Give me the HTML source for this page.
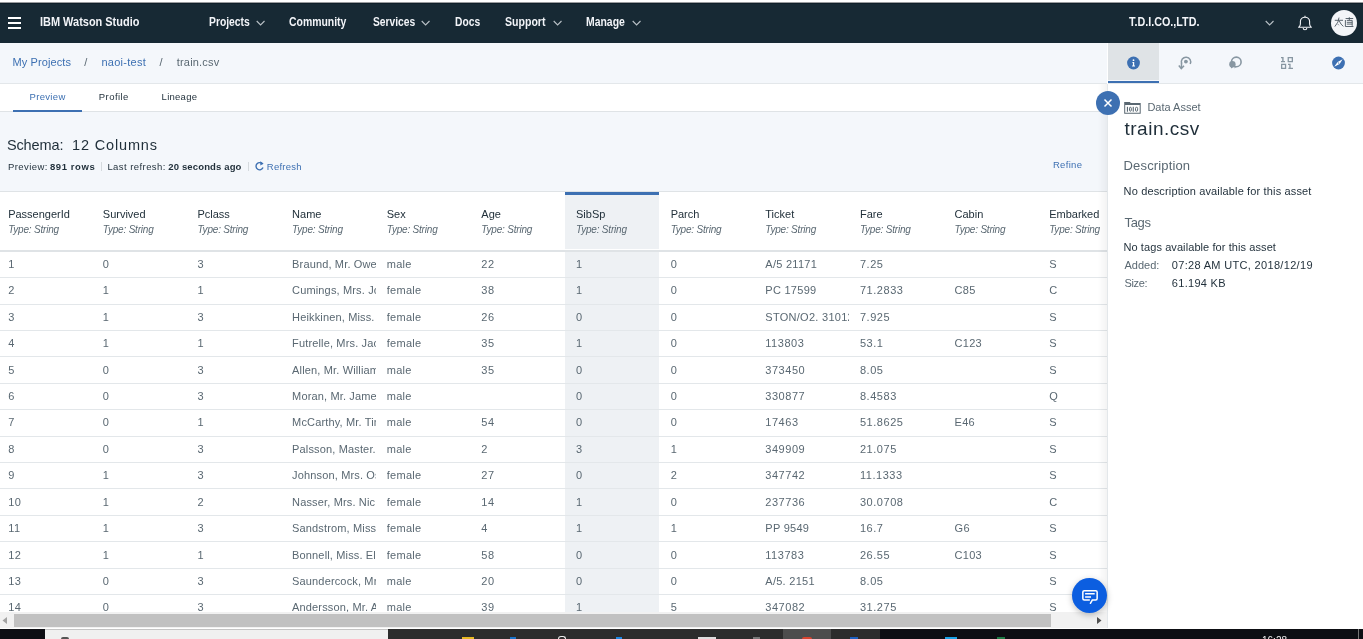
<!DOCTYPE html>
<html><head><meta charset="utf-8"><style>
*{box-sizing:border-box;margin:0;padding:0}
html,body{width:1363px;height:639px;overflow:hidden;background:#f4f7fb;font-family:"Liberation Sans",sans-serif;position:relative}
.abs{position:absolute}
.tx{position:absolute;white-space:nowrap}
.hn{position:absolute;font-size:11px;line-height:11px;color:#22313b;white-space:nowrap}
.ht{position:absolute;font-size:10px;line-height:10px;letter-spacing:-0.2px;font-style:italic;color:#5a6872;white-space:nowrap}
.cl{position:absolute;font-size:11px;line-height:11px;letter-spacing:0.4px;color:#5a6872;white-space:nowrap;overflow:hidden;height:14px}
.rl{left:0;width:1108px;height:1px;background:#e3e7ea}
.chev{position:absolute;width:5.5px;height:5.5px;border-right:1px solid #c9ced3;border-bottom:1px solid #c9ced3;transform:rotate(45deg)}
</style></head><body><div id="root" style="position:absolute;left:0;top:0;width:1363px;height:639px;overflow:hidden;will-change:transform">
<div class="abs" style="left:0;top:0;width:1363px;height:3px;background:#fff"></div>
<!-- header -->
<div class="abs" style="left:0;top:2px;width:1363px;height:1px;background:#9a9c9f"></div><div class="abs" style="left:0;top:3px;width:1363px;height:40px;background:#172934;border-top:1px solid #0f1f29"></div>
<div class="abs" style="left:8px;top:17px;width:13px;height:2px;background:#fff"></div>
<div class="abs" style="left:8px;top:22px;width:13px;height:2px;background:#fff"></div>
<div class="abs" style="left:8px;top:27px;width:13px;height:2px;background:#fff"></div>
<svg class="abs" style="left:255.6px;top:19.6px" width="10" height="7" viewBox="0 0 10 7"><path d="M0.7 1 L4.6 5 L8.5 1" fill="none" stroke="#b9c0c6" stroke-width="1.1"/></svg>
<svg class="abs" style="left:420.8px;top:19.6px" width="10" height="7" viewBox="0 0 10 7"><path d="M0.7 1 L4.6 5 L8.5 1" fill="none" stroke="#b9c0c6" stroke-width="1.1"/></svg>
<svg class="abs" style="left:552.5px;top:19.6px" width="10" height="7" viewBox="0 0 10 7"><path d="M0.7 1 L4.6 5 L8.5 1" fill="none" stroke="#b9c0c6" stroke-width="1.1"/></svg>
<svg class="abs" style="left:631.8px;top:19.6px" width="10" height="7" viewBox="0 0 10 7"><path d="M0.7 1 L4.6 5 L8.5 1" fill="none" stroke="#b9c0c6" stroke-width="1.1"/></svg>
<svg class="abs" style="left:1264.8px;top:19.6px" width="10" height="7" viewBox="0 0 10 7"><path d="M0.7 1 L4.6 5 L8.5 1" fill="none" stroke="#b9c0c6" stroke-width="1.1"/></svg>
<svg class="abs" style="left:1296px;top:14px" width="18" height="18" viewBox="0 0 18 18"><path d="M2.6 13.3 L15.4 13.3 Q13.6 11.8 13.6 10 L13.6 7.6 C13.6 4.9 11.5 3.2 9 3.2 C6.5 3.2 4.4 4.9 4.4 7.6 L4.4 10 Q4.4 11.8 2.6 13.3 Z" fill="none" stroke="#f2f4f8" stroke-width="1.1" stroke-linejoin="round"/><path d="M7.2 13.9 A1.75 1.75 0 0 0 10.8 13.9" fill="none" stroke="#f2f4f8" stroke-width="1.1"/><path d="M9 1.7 L9 3.2" stroke="#f2f4f8" stroke-width="1.1"/></svg>
<div class="abs" style="left:1331px;top:10px;width:26px;height:26px;border-radius:50%;background:#f3f5f8"></div>
<svg class="abs" style="left:1333px;top:16px" width="22" height="12" viewBox="0 0 22 12"><g fill="none" stroke="#4a5660" stroke-width="0.9"><path d="M1.8 4.3 L10 4.3"/><path d="M6 1.6 Q6 6 1.8 10.6"/><path d="M6.3 5 Q7.8 8.6 10.4 10.4"/><path d="M5 8.3 L5.8 9.2"/><path d="M12.6 2.5 L20.2 2.5"/><path d="M16.3 1.2 L16.3 4.2"/><path d="M13.8 4.4 L19.2 4.4 L19.2 9.8 M13.8 6.3 L19.2 6.3 M13.8 8.1 L19.2 8.1"/><path d="M12.4 4 L12.4 10.5 L20.4 10.5"/></g></svg>
<!-- breadcrumb / tabs -->
<div class="abs" style="left:0;top:83px;width:1108px;height:1px;background:#e3e7ea"></div>
<div class="abs" style="left:0;top:84px;width:1108px;height:27px;background:#fff"></div>
<div class="abs" style="left:0;top:111px;width:1108px;height:1px;background:#dfe3e6"></div>
<div class="abs" style="left:13px;top:110px;width:69px;height:2px;background:#3d70b2"></div>
<!-- meta separators -->
<div class="abs" style="left:100.5px;top:162px;width:1px;height:9px;background:#d5dade"></div>
<div class="abs" style="left:247.5px;top:162px;width:1px;height:9px;background:#d5dade"></div>
<svg class="abs" style="left:255px;top:160px" width="10" height="12" viewBox="0 0 10 12"><path d="M7.6 4.2 A3.6 3.6 0 1 0 8 7.5" fill="none" stroke="#3d70b2" stroke-width="1.4"/><path d="M5.2 1.2 L8.6 3.6 L5.4 5.6 Z" fill="#3d70b2"/></svg>
<!-- table -->
<div class="abs" style="left:0;top:191px;width:1108px;height:1px;background:#dfe3e6"></div>
<div class="abs" style="left:0;top:192px;width:1108px;height:420px;background:#fff"></div>
<div class="abs" style="left:565px;top:192px;width:94px;height:57px;background:#eef1f4"></div>
<div class="abs" style="left:565px;top:192px;width:94px;height:3px;background:#3d70b2"></div>
<div class="abs" style="left:565px;top:252px;width:94px;height:360px;background:#eef1f4"></div>
<div class="abs" style="left:0;top:250px;width:1108px;height:2px;background:#dfe3e6"></div>
<div class="abs rl" style="top:277px"></div>
<div class="abs rl" style="top:304px"></div>
<div class="abs rl" style="top:330px"></div>
<div class="abs rl" style="top:356px"></div>
<div class="abs rl" style="top:383px"></div>
<div class="abs rl" style="top:409px"></div>
<div class="abs rl" style="top:436px"></div>
<div class="abs rl" style="top:462px"></div>
<div class="abs rl" style="top:488px"></div>
<div class="abs rl" style="top:515px"></div>
<div class="abs rl" style="top:541px"></div>
<div class="abs rl" style="top:568px"></div>
<div class="abs rl" style="top:594px"></div>
<div class="abs rl" style="top:621px"></div>
<div class="hn" style="left:8.16px;top:209.3px">PassengerId</div>
<div class="ht" style="left:8.16px;top:225.0px">Type: String</div>
<div class="cl" style="left:8.16px;top:259.0px;width:83.64px;letter-spacing:0.55px">1</div>
<div class="cl" style="left:8.16px;top:285.0px;width:83.64px;letter-spacing:0.55px">2</div>
<div class="cl" style="left:8.16px;top:312.0px;width:83.64px;letter-spacing:0.55px">3</div>
<div class="cl" style="left:8.16px;top:338.0px;width:83.64px;letter-spacing:0.55px">4</div>
<div class="cl" style="left:8.16px;top:365.0px;width:83.64px;letter-spacing:0.55px">5</div>
<div class="cl" style="left:8.16px;top:391.0px;width:83.64px;letter-spacing:0.55px">6</div>
<div class="cl" style="left:8.16px;top:417.0px;width:83.64px;letter-spacing:0.55px">7</div>
<div class="cl" style="left:8.16px;top:444.0px;width:83.64px;letter-spacing:0.55px">8</div>
<div class="cl" style="left:8.16px;top:470.0px;width:83.64px;letter-spacing:0.55px">9</div>
<div class="cl" style="left:8.16px;top:497.0px;width:83.64px;letter-spacing:0.55px">10</div>
<div class="cl" style="left:8.16px;top:523.0px;width:83.64px;letter-spacing:0.55px">11</div>
<div class="cl" style="left:8.16px;top:550.0px;width:83.64px;letter-spacing:0.55px">12</div>
<div class="cl" style="left:8.16px;top:576.0px;width:83.64px;letter-spacing:0.55px">13</div>
<div class="cl" style="left:8.16px;top:602.0px;width:83.64px;letter-spacing:0.55px">14</div>
<div class="hn" style="left:102.80px;top:209.3px">Survived</div>
<div class="ht" style="left:102.80px;top:225.0px">Type: String</div>
<div class="cl" style="left:102.80px;top:259.0px;width:83.64px;letter-spacing:0.55px">0</div>
<div class="cl" style="left:102.80px;top:285.0px;width:83.64px;letter-spacing:0.55px">1</div>
<div class="cl" style="left:102.80px;top:312.0px;width:83.64px;letter-spacing:0.55px">1</div>
<div class="cl" style="left:102.80px;top:338.0px;width:83.64px;letter-spacing:0.55px">1</div>
<div class="cl" style="left:102.80px;top:365.0px;width:83.64px;letter-spacing:0.55px">0</div>
<div class="cl" style="left:102.80px;top:391.0px;width:83.64px;letter-spacing:0.55px">0</div>
<div class="cl" style="left:102.80px;top:417.0px;width:83.64px;letter-spacing:0.55px">0</div>
<div class="cl" style="left:102.80px;top:444.0px;width:83.64px;letter-spacing:0.55px">0</div>
<div class="cl" style="left:102.80px;top:470.0px;width:83.64px;letter-spacing:0.55px">1</div>
<div class="cl" style="left:102.80px;top:497.0px;width:83.64px;letter-spacing:0.55px">1</div>
<div class="cl" style="left:102.80px;top:523.0px;width:83.64px;letter-spacing:0.55px">1</div>
<div class="cl" style="left:102.80px;top:550.0px;width:83.64px;letter-spacing:0.55px">1</div>
<div class="cl" style="left:102.80px;top:576.0px;width:83.64px;letter-spacing:0.55px">0</div>
<div class="cl" style="left:102.80px;top:602.0px;width:83.64px;letter-spacing:0.55px">0</div>
<div class="hn" style="left:197.44px;top:209.3px">Pclass</div>
<div class="ht" style="left:197.44px;top:225.0px">Type: String</div>
<div class="cl" style="left:197.44px;top:259.0px;width:83.64px;letter-spacing:0.55px">3</div>
<div class="cl" style="left:197.44px;top:285.0px;width:83.64px;letter-spacing:0.55px">1</div>
<div class="cl" style="left:197.44px;top:312.0px;width:83.64px;letter-spacing:0.55px">3</div>
<div class="cl" style="left:197.44px;top:338.0px;width:83.64px;letter-spacing:0.55px">1</div>
<div class="cl" style="left:197.44px;top:365.0px;width:83.64px;letter-spacing:0.55px">3</div>
<div class="cl" style="left:197.44px;top:391.0px;width:83.64px;letter-spacing:0.55px">3</div>
<div class="cl" style="left:197.44px;top:417.0px;width:83.64px;letter-spacing:0.55px">1</div>
<div class="cl" style="left:197.44px;top:444.0px;width:83.64px;letter-spacing:0.55px">3</div>
<div class="cl" style="left:197.44px;top:470.0px;width:83.64px;letter-spacing:0.55px">3</div>
<div class="cl" style="left:197.44px;top:497.0px;width:83.64px;letter-spacing:0.55px">2</div>
<div class="cl" style="left:197.44px;top:523.0px;width:83.64px;letter-spacing:0.55px">3</div>
<div class="cl" style="left:197.44px;top:550.0px;width:83.64px;letter-spacing:0.55px">1</div>
<div class="cl" style="left:197.44px;top:576.0px;width:83.64px;letter-spacing:0.55px">3</div>
<div class="cl" style="left:197.44px;top:602.0px;width:83.64px;letter-spacing:0.55px">3</div>
<div class="hn" style="left:292.08px;top:209.3px">Name</div>
<div class="ht" style="left:292.08px;top:225.0px">Type: String</div>
<div class="cl" style="left:292.08px;top:259.0px;width:83.64px;letter-spacing:0.15px">Braund, Mr. Owen Harris</div>
<div class="cl" style="left:292.08px;top:285.0px;width:83.64px;letter-spacing:0.15px">Cumings, Mrs. John Bradley</div>
<div class="cl" style="left:292.08px;top:312.0px;width:83.64px;letter-spacing:0.15px">Heikkinen, Miss. Laina</div>
<div class="cl" style="left:292.08px;top:338.0px;width:83.64px;letter-spacing:0.15px">Futrelle, Mrs. Jacques Heath</div>
<div class="cl" style="left:292.08px;top:365.0px;width:83.64px;letter-spacing:0.15px">Allen, Mr. William Henry</div>
<div class="cl" style="left:292.08px;top:391.0px;width:83.64px;letter-spacing:0.15px">Moran, Mr. James</div>
<div class="cl" style="left:292.08px;top:417.0px;width:83.64px;letter-spacing:0.15px">McCarthy, Mr. Timothy J</div>
<div class="cl" style="left:292.08px;top:444.0px;width:83.64px;letter-spacing:0.15px">Palsson, Master. Gosta Leonard</div>
<div class="cl" style="left:292.08px;top:470.0px;width:83.64px;letter-spacing:0.15px">Johnson, Mrs. Oscar W</div>
<div class="cl" style="left:292.08px;top:497.0px;width:83.64px;letter-spacing:0.15px">Nasser, Mrs. Nicholas</div>
<div class="cl" style="left:292.08px;top:523.0px;width:83.64px;letter-spacing:0.15px">Sandstrom, Miss. Marguerite Rut</div>
<div class="cl" style="left:292.08px;top:550.0px;width:83.64px;letter-spacing:0.15px">Bonnell, Miss. Elizabeth</div>
<div class="cl" style="left:292.08px;top:576.0px;width:83.64px;letter-spacing:0.15px">Saundercock, Mr. William Henry</div>
<div class="cl" style="left:292.08px;top:602.0px;width:83.64px;letter-spacing:0.15px">Andersson, Mr. Anders Johan</div>
<div class="hn" style="left:386.72px;top:209.3px">Sex</div>
<div class="ht" style="left:386.72px;top:225.0px">Type: String</div>
<div class="cl" style="left:386.72px;top:259.0px;width:83.64px;letter-spacing:0.28px">male</div>
<div class="cl" style="left:386.72px;top:285.0px;width:83.64px;letter-spacing:0.28px">female</div>
<div class="cl" style="left:386.72px;top:312.0px;width:83.64px;letter-spacing:0.28px">female</div>
<div class="cl" style="left:386.72px;top:338.0px;width:83.64px;letter-spacing:0.28px">female</div>
<div class="cl" style="left:386.72px;top:365.0px;width:83.64px;letter-spacing:0.28px">male</div>
<div class="cl" style="left:386.72px;top:391.0px;width:83.64px;letter-spacing:0.28px">male</div>
<div class="cl" style="left:386.72px;top:417.0px;width:83.64px;letter-spacing:0.28px">male</div>
<div class="cl" style="left:386.72px;top:444.0px;width:83.64px;letter-spacing:0.28px">male</div>
<div class="cl" style="left:386.72px;top:470.0px;width:83.64px;letter-spacing:0.28px">female</div>
<div class="cl" style="left:386.72px;top:497.0px;width:83.64px;letter-spacing:0.28px">female</div>
<div class="cl" style="left:386.72px;top:523.0px;width:83.64px;letter-spacing:0.28px">female</div>
<div class="cl" style="left:386.72px;top:550.0px;width:83.64px;letter-spacing:0.28px">female</div>
<div class="cl" style="left:386.72px;top:576.0px;width:83.64px;letter-spacing:0.28px">male</div>
<div class="cl" style="left:386.72px;top:602.0px;width:83.64px;letter-spacing:0.28px">male</div>
<div class="hn" style="left:481.36px;top:209.3px">Age</div>
<div class="ht" style="left:481.36px;top:225.0px">Type: String</div>
<div class="cl" style="left:481.36px;top:259.0px;width:83.64px;letter-spacing:0.55px">22</div>
<div class="cl" style="left:481.36px;top:285.0px;width:83.64px;letter-spacing:0.55px">38</div>
<div class="cl" style="left:481.36px;top:312.0px;width:83.64px;letter-spacing:0.55px">26</div>
<div class="cl" style="left:481.36px;top:338.0px;width:83.64px;letter-spacing:0.55px">35</div>
<div class="cl" style="left:481.36px;top:365.0px;width:83.64px;letter-spacing:0.55px">35</div>
<div class="cl" style="left:481.36px;top:417.0px;width:83.64px;letter-spacing:0.55px">54</div>
<div class="cl" style="left:481.36px;top:444.0px;width:83.64px;letter-spacing:0.55px">2</div>
<div class="cl" style="left:481.36px;top:470.0px;width:83.64px;letter-spacing:0.55px">27</div>
<div class="cl" style="left:481.36px;top:497.0px;width:83.64px;letter-spacing:0.55px">14</div>
<div class="cl" style="left:481.36px;top:523.0px;width:83.64px;letter-spacing:0.55px">4</div>
<div class="cl" style="left:481.36px;top:550.0px;width:83.64px;letter-spacing:0.55px">58</div>
<div class="cl" style="left:481.36px;top:576.0px;width:83.64px;letter-spacing:0.55px">20</div>
<div class="cl" style="left:481.36px;top:602.0px;width:83.64px;letter-spacing:0.55px">39</div>
<div class="hn" style="left:576.00px;top:209.3px">SibSp</div>
<div class="ht" style="left:576.00px;top:225.0px">Type: String</div>
<div class="cl" style="left:576.00px;top:259.0px;width:83.64px;letter-spacing:0.55px">1</div>
<div class="cl" style="left:576.00px;top:285.0px;width:83.64px;letter-spacing:0.55px">1</div>
<div class="cl" style="left:576.00px;top:312.0px;width:83.64px;letter-spacing:0.55px">0</div>
<div class="cl" style="left:576.00px;top:338.0px;width:83.64px;letter-spacing:0.55px">1</div>
<div class="cl" style="left:576.00px;top:365.0px;width:83.64px;letter-spacing:0.55px">0</div>
<div class="cl" style="left:576.00px;top:391.0px;width:83.64px;letter-spacing:0.55px">0</div>
<div class="cl" style="left:576.00px;top:417.0px;width:83.64px;letter-spacing:0.55px">0</div>
<div class="cl" style="left:576.00px;top:444.0px;width:83.64px;letter-spacing:0.55px">3</div>
<div class="cl" style="left:576.00px;top:470.0px;width:83.64px;letter-spacing:0.55px">0</div>
<div class="cl" style="left:576.00px;top:497.0px;width:83.64px;letter-spacing:0.55px">1</div>
<div class="cl" style="left:576.00px;top:523.0px;width:83.64px;letter-spacing:0.55px">1</div>
<div class="cl" style="left:576.00px;top:550.0px;width:83.64px;letter-spacing:0.55px">0</div>
<div class="cl" style="left:576.00px;top:576.0px;width:83.64px;letter-spacing:0.55px">0</div>
<div class="cl" style="left:576.00px;top:602.0px;width:83.64px;letter-spacing:0.55px">1</div>
<div class="hn" style="left:670.64px;top:209.3px">Parch</div>
<div class="ht" style="left:670.64px;top:225.0px">Type: String</div>
<div class="cl" style="left:670.64px;top:259.0px;width:83.64px;letter-spacing:0.55px">0</div>
<div class="cl" style="left:670.64px;top:285.0px;width:83.64px;letter-spacing:0.55px">0</div>
<div class="cl" style="left:670.64px;top:312.0px;width:83.64px;letter-spacing:0.55px">0</div>
<div class="cl" style="left:670.64px;top:338.0px;width:83.64px;letter-spacing:0.55px">0</div>
<div class="cl" style="left:670.64px;top:365.0px;width:83.64px;letter-spacing:0.55px">0</div>
<div class="cl" style="left:670.64px;top:391.0px;width:83.64px;letter-spacing:0.55px">0</div>
<div class="cl" style="left:670.64px;top:417.0px;width:83.64px;letter-spacing:0.55px">0</div>
<div class="cl" style="left:670.64px;top:444.0px;width:83.64px;letter-spacing:0.55px">1</div>
<div class="cl" style="left:670.64px;top:470.0px;width:83.64px;letter-spacing:0.55px">2</div>
<div class="cl" style="left:670.64px;top:497.0px;width:83.64px;letter-spacing:0.55px">0</div>
<div class="cl" style="left:670.64px;top:523.0px;width:83.64px;letter-spacing:0.55px">1</div>
<div class="cl" style="left:670.64px;top:550.0px;width:83.64px;letter-spacing:0.55px">0</div>
<div class="cl" style="left:670.64px;top:576.0px;width:83.64px;letter-spacing:0.55px">0</div>
<div class="cl" style="left:670.64px;top:602.0px;width:83.64px;letter-spacing:0.55px">5</div>
<div class="hn" style="left:765.28px;top:209.3px">Ticket</div>
<div class="ht" style="left:765.28px;top:225.0px">Type: String</div>
<div class="cl" style="left:765.28px;top:259.0px;width:83.64px;letter-spacing:0.28px">A/5 21171</div>
<div class="cl" style="left:765.28px;top:285.0px;width:83.64px;letter-spacing:0.28px">PC 17599</div>
<div class="cl" style="left:765.28px;top:312.0px;width:83.64px;letter-spacing:0.28px">STON/O2. 3101282</div>
<div class="cl" style="left:765.28px;top:338.0px;width:83.64px;letter-spacing:0.55px">113803</div>
<div class="cl" style="left:765.28px;top:365.0px;width:83.64px;letter-spacing:0.55px">373450</div>
<div class="cl" style="left:765.28px;top:391.0px;width:83.64px;letter-spacing:0.55px">330877</div>
<div class="cl" style="left:765.28px;top:417.0px;width:83.64px;letter-spacing:0.55px">17463</div>
<div class="cl" style="left:765.28px;top:444.0px;width:83.64px;letter-spacing:0.55px">349909</div>
<div class="cl" style="left:765.28px;top:470.0px;width:83.64px;letter-spacing:0.55px">347742</div>
<div class="cl" style="left:765.28px;top:497.0px;width:83.64px;letter-spacing:0.55px">237736</div>
<div class="cl" style="left:765.28px;top:523.0px;width:83.64px;letter-spacing:0.28px">PP 9549</div>
<div class="cl" style="left:765.28px;top:550.0px;width:83.64px;letter-spacing:0.55px">113783</div>
<div class="cl" style="left:765.28px;top:576.0px;width:83.64px;letter-spacing:0.28px">A/5. 2151</div>
<div class="cl" style="left:765.28px;top:602.0px;width:83.64px;letter-spacing:0.55px">347082</div>
<div class="hn" style="left:859.92px;top:209.3px">Fare</div>
<div class="ht" style="left:859.92px;top:225.0px">Type: String</div>
<div class="cl" style="left:859.92px;top:259.0px;width:83.64px;letter-spacing:0.55px">7.25</div>
<div class="cl" style="left:859.92px;top:285.0px;width:83.64px;letter-spacing:0.55px">71.2833</div>
<div class="cl" style="left:859.92px;top:312.0px;width:83.64px;letter-spacing:0.55px">7.925</div>
<div class="cl" style="left:859.92px;top:338.0px;width:83.64px;letter-spacing:0.55px">53.1</div>
<div class="cl" style="left:859.92px;top:365.0px;width:83.64px;letter-spacing:0.55px">8.05</div>
<div class="cl" style="left:859.92px;top:391.0px;width:83.64px;letter-spacing:0.55px">8.4583</div>
<div class="cl" style="left:859.92px;top:417.0px;width:83.64px;letter-spacing:0.55px">51.8625</div>
<div class="cl" style="left:859.92px;top:444.0px;width:83.64px;letter-spacing:0.55px">21.075</div>
<div class="cl" style="left:859.92px;top:470.0px;width:83.64px;letter-spacing:0.55px">11.1333</div>
<div class="cl" style="left:859.92px;top:497.0px;width:83.64px;letter-spacing:0.55px">30.0708</div>
<div class="cl" style="left:859.92px;top:523.0px;width:83.64px;letter-spacing:0.55px">16.7</div>
<div class="cl" style="left:859.92px;top:550.0px;width:83.64px;letter-spacing:0.55px">26.55</div>
<div class="cl" style="left:859.92px;top:576.0px;width:83.64px;letter-spacing:0.55px">8.05</div>
<div class="cl" style="left:859.92px;top:602.0px;width:83.64px;letter-spacing:0.55px">31.275</div>
<div class="hn" style="left:954.56px;top:209.3px">Cabin</div>
<div class="ht" style="left:954.56px;top:225.0px">Type: String</div>
<div class="cl" style="left:954.56px;top:285.0px;width:83.64px;letter-spacing:0.28px">C85</div>
<div class="cl" style="left:954.56px;top:338.0px;width:83.64px;letter-spacing:0.28px">C123</div>
<div class="cl" style="left:954.56px;top:417.0px;width:83.64px;letter-spacing:0.28px">E46</div>
<div class="cl" style="left:954.56px;top:523.0px;width:83.64px;letter-spacing:0.28px">G6</div>
<div class="cl" style="left:954.56px;top:550.0px;width:83.64px;letter-spacing:0.28px">C103</div>
<div class="hn" style="left:1049.20px;top:209.3px">Embarked</div>
<div class="ht" style="left:1049.20px;top:225.0px">Type: String</div>
<div class="cl" style="left:1049.20px;top:259.0px;width:83.64px;letter-spacing:0.28px">S</div>
<div class="cl" style="left:1049.20px;top:285.0px;width:83.64px;letter-spacing:0.28px">C</div>
<div class="cl" style="left:1049.20px;top:312.0px;width:83.64px;letter-spacing:0.28px">S</div>
<div class="cl" style="left:1049.20px;top:338.0px;width:83.64px;letter-spacing:0.28px">S</div>
<div class="cl" style="left:1049.20px;top:365.0px;width:83.64px;letter-spacing:0.28px">S</div>
<div class="cl" style="left:1049.20px;top:391.0px;width:83.64px;letter-spacing:0.28px">Q</div>
<div class="cl" style="left:1049.20px;top:417.0px;width:83.64px;letter-spacing:0.28px">S</div>
<div class="cl" style="left:1049.20px;top:444.0px;width:83.64px;letter-spacing:0.28px">S</div>
<div class="cl" style="left:1049.20px;top:470.0px;width:83.64px;letter-spacing:0.28px">S</div>
<div class="cl" style="left:1049.20px;top:497.0px;width:83.64px;letter-spacing:0.28px">C</div>
<div class="cl" style="left:1049.20px;top:523.0px;width:83.64px;letter-spacing:0.28px">S</div>
<div class="cl" style="left:1049.20px;top:550.0px;width:83.64px;letter-spacing:0.28px">S</div>
<div class="cl" style="left:1049.20px;top:576.0px;width:83.64px;letter-spacing:0.28px">S</div>
<div class="cl" style="left:1049.20px;top:602.0px;width:83.64px;letter-spacing:0.28px">S</div>
<!-- scrollbar -->
<div class="abs" style="left:0;top:612px;width:1108px;height:16px;background:#f1f1f1"></div>
<div class="abs" style="left:14px;top:614px;width:1037px;height:13px;background:#c1c1c1"></div>
<svg class="abs" style="left:2px;top:617px" width="6" height="7"><path d="M0.5 3.5 L5 0 L5 7 Z" fill="#a3a3a3"/></svg>
<svg class="abs" style="left:1097px;top:617px" width="5" height="7"><path d="M0 0 L4.5 3.5 L0 7 Z" fill="#505050"/></svg>
<div class="abs" style="left:0;top:628px;width:1363px;height:1px;background:#fff"></div>
<!-- taskbar -->
<div class="abs" style="left:0;top:629px;width:1363px;height:10px;background:#0d0e13"></div>
<div class="abs" style="left:45px;top:629px;width:343px;height:10px;background:#f0f0f0;border-top:1px solid #c4c4c4"></div>
<div class="abs" style="left:61px;top:637px;width:8px;height:2px;border-radius:3px 3px 0 0;background:#555"></div>
<div class="abs" style="left:388px;top:629px;width:492px;height:10px;background:#2c2c2c"></div>
<div class="abs" style="left:783px;top:629px;width:48px;height:10px;background:#4d4d4d"></div>
<div class="abs" style="left:462px;top:637px;width:12px;height:2px;background:#e8b923"></div>
<div class="abs" style="left:510px;top:637px;width:6px;height:2px;background:#1a73c9"></div>
<div class="abs" style="left:558px;top:636px;width:8px;height:3px;border:1.5px solid #eee;border-bottom:none;border-radius:4px 4px 0 0"></div>
<div class="abs" style="left:616px;top:637px;width:6px;height:2px;background:#1e88e5"></div>
<div class="abs" style="left:698px;top:637px;width:18px;height:2px;background:#ddd"></div>
<div class="abs" style="left:753px;top:637px;width:7px;height:2px;background:#777"></div>
<div class="abs" style="left:802px;top:636.5px;width:10px;height:2.5px;background:#d9442f;border-radius:4px 4px 0 0"></div>
<div class="abs" style="left:850px;top:637px;width:8px;height:2px;background:#1d5fbf"></div>
<div class="abs" style="left:945px;top:637px;width:12px;height:2px;background:#1aa3e8"></div>
<div class="abs" style="left:997px;top:637px;width:8px;height:2px;background:#1e7b45"></div>
<div class="abs" style="left:1262px;top:636px;font-size:10px;line-height:10px;color:#eee">16:28</div>
<div class="abs" style="left:1358px;top:629px;width:1px;height:10px;background:#777"></div>
<!-- right panel -->
<div class="abs" style="left:1098px;top:84px;width:10px;height:528px;background:linear-gradient(to right,rgba(0,0,0,0),rgba(0,0,0,0.05))"></div>
<div class="abs" style="left:1107px;top:43px;width:256px;height:585px;background:#fff"></div>
<div class="abs" style="left:1107px;top:84px;width:1px;height:544px;background:#e3e7ea"></div>
<div class="abs" style="left:1108px;top:43px;width:255px;height:40px;background:#f4f7fb"></div>
<div class="abs" style="left:1108px;top:43px;width:51px;height:37px;background:#dfe3e6"></div>
<div class="abs" style="left:1108px;top:81px;width:51px;height:2px;background:#3d70b2"></div>
<div class="abs" style="left:1108px;top:83px;width:255px;height:1px;background:#e3e7ea"></div>
<!-- panel icons -->
<svg class="abs" style="left:1126px;top:56px" width="15" height="14" viewBox="0 0 15 14"><circle cx="7.5" cy="7" r="6.4" fill="#3d70b2"/><circle cx="7.5" cy="4.2" r="0.9" fill="#fff"/><path d="M6.3 6 L8.2 6 L8.2 9.6 L9 9.6 L9 10.4 L6.1 10.4 L6.1 9.6 L6.9 9.6 L6.9 6.8 L6.3 6.8 Z" fill="#fff"/></svg>
<svg class="abs" style="left:1177px;top:54px" width="17" height="17" viewBox="0 0 17 17"><path d="M4.6 9.4 A4.7 4.7 0 1 1 13.2 10" fill="none" stroke="#8897a2" stroke-width="1.5"/><path d="M4.6 8.8 L4.3 14.2" fill="none" stroke="#8897a2" stroke-width="1.5"/><circle cx="8.9" cy="7.6" r="1.9" fill="#8897a2"/><path d="M1.8 11.6 L4.3 14.6 L7 11.8" fill="none" stroke="#8897a2" stroke-width="1.5"/></svg>
<svg class="abs" style="left:1228px;top:55px" width="17" height="17" viewBox="0 0 17 17"><circle cx="8.3" cy="6.9" r="4.8" fill="none" stroke="#8897a2" stroke-width="1.6"/><circle cx="4.4" cy="9.3" r="3.2" fill="#8897a2"/><path d="M2.2 11 L3.4 13.4 L5.6 11.6 Z M6.6 11.4 L6.4 13.6 L8.8 11.4 Z" fill="#8897a2"/></svg>
<svg class="abs" style="left:1279px;top:55px" width="16" height="16" viewBox="0 0 16 16"><g fill="#8897a2"><path d="M2 2 L4.6 2 L4.6 6 L6 6 L6 7.2 L2 7.2 L2 6 L3.2 6 L3.2 3.3 L2 3.3 Z"/><path d="M8.6 2 L14 2 L14 7.2 L8.6 7.2 Z M9.9 3.3 L9.9 5.9 L12.7 5.9 L12.7 3.3 Z"/><path d="M2 8.8 L7.2 8.8 L7.2 14 L2 14 Z M3.3 10.1 L3.3 12.7 L5.9 12.7 L5.9 10.1 Z"/><path d="M9 8.8 L11.6 8.8 L11.6 12.8 L14 12.8 L14 14 L9.4 14 L9.4 12.8 L10.3 12.8 L10.3 10.1 L9 10.1 Z"/></g></svg>
<svg class="abs" style="left:1331px;top:56px" width="15" height="14" viewBox="0 0 15 14"><circle cx="7.5" cy="7" r="6.4" fill="#3d70b2"/><path d="M3.2 10.8 L6.6 6 L8.6 8 Z" fill="#fff"/><path d="M11.6 3.2 L8.6 8 L6.6 6 Z" fill="#fff"/><circle cx="7.6" cy="7" r="0.6" fill="#3d70b2"/></svg>
<!-- data asset icon -->
<svg class="abs" style="left:1123px;top:101px" width="19" height="14" viewBox="0 0 19 14"><g fill="#5a6872"><path d="M1.2 1.1 L7 1.1 L7.6 2.1 L17.7 2.1 L17.7 12.8 L1.2 12.8 Z M2.2 4.1 L2.2 11.8 L16.7 11.8 L16.7 4.1 Z"/><rect x="3.9" y="5.8" width="1.1" height="4.9"/><rect x="9.7" y="5.8" width="1.1" height="4.9"/></g><g fill="none" stroke="#5a6872" stroke-width="1"><rect x="6.5" y="6.3" width="1.8" height="3.9" rx="0.9"/><rect x="12.5" y="6.3" width="2.1" height="3.9" rx="1"/></g></svg>
<!-- close button -->
<div class="abs" style="left:1096px;top:91px;width:24px;height:24px;border-radius:50%;background:#3d70b2"></div>
<svg class="abs" style="left:1102px;top:97px" width="12" height="12" viewBox="0 0 12 12"><path d="M2.5 2.5 L9.5 9.5 M9.5 2.5 L2.5 9.5" stroke="#fff" stroke-width="1.5"/></svg>
<!-- chat button -->
<div class="abs" style="left:1072px;top:578px;width:35px;height:35px;border-radius:50%;background:#0c5ee0;box-shadow:0 2px 6px rgba(0,0,0,0.25)"></div>
<svg class="abs" style="left:1081px;top:588px" width="18" height="18" viewBox="0 0 18 18"><path d="M8.3 12.05 L3.3 12.05 Q1.85 12.05 1.85 10.6 L1.85 4.1 Q1.85 2.65 3.3 2.65 L14.7 2.65 Q16.15 2.65 16.15 4.1 L16.15 10.6 Q16.15 12.05 14.7 12.05 L11.3 12.05 L9.4 15.3" fill="none" stroke="#fff" stroke-width="1.5" stroke-linecap="round"/><path d="M4.1 5.85 L13.7 5.85 M4.1 9.05 L10 9.05" stroke="#fff" stroke-width="1.5"/></svg>
<div class="tx" style="left:40.1px;top:16.2px;font-size:12px;line-height:12px;font-weight:bold;font-style:normal;letter-spacing:0px;color:#f2f4f8;transform:scaleX(0.9128);transform-origin:0 0;">IBM Watson Studio</div>
<div class="tx" style="left:208.5px;top:16.2px;font-size:12px;line-height:12px;font-weight:bold;font-style:normal;letter-spacing:0px;color:#f2f4f8;transform:scaleX(0.8617);transform-origin:0 0;">Projects</div>
<div class="tx" style="left:289.3px;top:16.2px;font-size:12px;line-height:12px;font-weight:bold;font-style:normal;letter-spacing:0px;color:#f2f4f8;transform:scaleX(0.8697);transform-origin:0 0;">Community</div>
<div class="tx" style="left:372.9px;top:16.2px;font-size:12px;line-height:12px;font-weight:bold;font-style:normal;letter-spacing:0px;color:#f2f4f8;transform:scaleX(0.8551);transform-origin:0 0;">Services</div>
<div class="tx" style="left:455.0px;top:16.2px;font-size:12px;line-height:12px;font-weight:bold;font-style:normal;letter-spacing:0px;color:#f2f4f8;transform:scaleX(0.8552);transform-origin:0 0;">Docs</div>
<div class="tx" style="left:505.1px;top:16.2px;font-size:12px;line-height:12px;font-weight:bold;font-style:normal;letter-spacing:0px;color:#f2f4f8;transform:scaleX(0.8804);transform-origin:0 0;">Support</div>
<div class="tx" style="left:585.8px;top:16.2px;font-size:12px;line-height:12px;font-weight:bold;font-style:normal;letter-spacing:0px;color:#f2f4f8;transform:scaleX(0.8689);transform-origin:0 0;">Manage</div>
<div class="tx" style="left:1129.3px;top:16.2px;font-size:12px;line-height:12px;font-weight:bold;font-style:normal;letter-spacing:0px;color:#f2f4f8;transform:scaleX(0.8987);transform-origin:0 0;">T.D.I.CO.,LTD.</div>
<div class="tx" style="left:12.4px;top:57.0px;font-size:11px;line-height:11px;font-weight:normal;font-style:normal;letter-spacing:0.12px;color:#3d70b2;">My Projects</div>
<div class="tx" style="left:84.3px;top:57.0px;font-size:11px;line-height:11px;font-weight:normal;font-style:normal;letter-spacing:0px;color:#5a6872;">/</div>
<div class="tx" style="left:101.5px;top:57.0px;font-size:11px;line-height:11px;font-weight:normal;font-style:normal;letter-spacing:0.25px;color:#3d70b2;">naoi-test</div>
<div class="tx" style="left:159.4px;top:57.0px;font-size:11px;line-height:11px;font-weight:normal;font-style:normal;letter-spacing:0px;color:#5a6872;">/</div>
<div class="tx" style="left:176.8px;top:57.0px;font-size:11px;line-height:11px;font-weight:normal;font-style:normal;letter-spacing:0.175px;color:#5a6872;">train.csv</div>
<div class="tx" style="left:29.5px;top:91.6px;font-size:9.5px;line-height:9.5px;font-weight:normal;font-style:normal;letter-spacing:0.334px;color:#3d70b2;">Preview</div>
<div class="tx" style="left:98.8px;top:91.6px;font-size:9.5px;line-height:9.5px;font-weight:normal;font-style:normal;letter-spacing:0.433px;color:#1f2e39;">Profile</div>
<div class="tx" style="left:161.6px;top:91.6px;font-size:9.5px;line-height:9.5px;font-weight:normal;font-style:normal;letter-spacing:0.266px;color:#1f2e39;">Lineage</div>
<div class="tx" style="left:6.9px;top:137.8px;font-size:14.5px;line-height:14.5px;font-weight:normal;font-style:normal;letter-spacing:-0.1px;color:#1f2e39;">Schema:</div>
<div class="tx" style="left:72.0px;top:137.8px;font-size:14.5px;line-height:14.5px;font-weight:normal;font-style:normal;letter-spacing:0.844px;color:#1f2e39;">12 Columns</div>
<div class="tx" style="left:8.0px;top:162.0px;font-size:9.5px;line-height:9.5px;font-weight:normal;font-style:normal;letter-spacing:0.429px;color:#1f2e39;">Preview:</div>
<div class="tx" style="left:50.0px;top:162.0px;font-size:9.5px;line-height:9.5px;font-weight:bold;font-style:normal;letter-spacing:0.571px;color:#1f2e39;">891 rows</div>
<div class="tx" style="left:107.4px;top:162.0px;font-size:9.5px;line-height:9.5px;font-weight:normal;font-style:normal;letter-spacing:0.434px;color:#1f2e39;">Last refresh:</div>
<div class="tx" style="left:168.3px;top:162.0px;font-size:9.5px;line-height:9.5px;font-weight:bold;font-style:normal;letter-spacing:0.139px;color:#1f2e39;">20 seconds ago</div>
<div class="tx" style="left:266.8px;top:162.0px;font-size:9.5px;line-height:9.5px;font-weight:normal;font-style:normal;letter-spacing:0.233px;color:#3d70b2;">Refresh</div>
<div class="tx" style="left:1052.9px;top:160.2px;font-size:9.5px;line-height:9.5px;font-weight:normal;font-style:normal;letter-spacing:0.32px;color:#3d70b2;">Refine</div>
<div class="tx" style="left:1147.4px;top:101.9px;font-size:11px;line-height:11px;font-weight:normal;font-style:normal;letter-spacing:0.0px;color:#5a6872;">Data Asset</div>
<div class="tx" style="left:1124.5px;top:119.1px;font-size:19px;line-height:19px;font-weight:normal;font-style:normal;letter-spacing:0.5px;color:#1f2e39;">train.csv</div>
<div class="tx" style="left:1123.6px;top:159.0px;font-size:13px;line-height:13px;font-weight:normal;font-style:normal;letter-spacing:0.14px;color:#5a6872;">Description</div>
<div class="tx" style="left:1123.6px;top:186.1px;font-size:11px;line-height:11px;font-weight:normal;font-style:normal;letter-spacing:0.147px;color:#1f2e39;">No description available for this asset</div>
<div class="tx" style="left:1124.5px;top:216.0px;font-size:13px;line-height:13px;font-weight:normal;font-style:normal;letter-spacing:-0.333px;color:#5a6872;">Tags</div>
<div class="tx" style="left:1123.5px;top:241.5px;font-size:11px;line-height:11px;font-weight:normal;font-style:normal;letter-spacing:0.084px;color:#1f2e39;">No tags available for this asset</div>
<div class="tx" style="left:1124.5px;top:259.8px;font-size:11px;line-height:11px;font-weight:normal;font-style:normal;letter-spacing:0.0px;color:#5a6872;">Added:</div>
<div class="tx" style="left:1171.8px;top:259.8px;font-size:11px;line-height:11px;font-weight:normal;font-style:normal;letter-spacing:0.322px;color:#1f2e39;">07:28 AM UTC, 2018/12/19</div>
<div class="tx" style="left:1124.5px;top:278.0px;font-size:11px;line-height:11px;font-weight:normal;font-style:normal;letter-spacing:-0.35px;color:#5a6872;">Size:</div>
<div class="tx" style="left:1171.8px;top:278.0px;font-size:11px;line-height:11px;font-weight:normal;font-style:normal;letter-spacing:0.3px;color:#1f2e39;">61.194 KB</div>
</div></body></html>
